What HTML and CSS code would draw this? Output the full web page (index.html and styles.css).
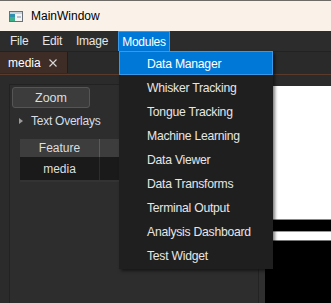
FILE: index.html
```html
<!DOCTYPE html>
<html lang="en">
<head>
    <meta charset="UTF-8">
    <title>MainWindow</title>
    <link rel="stylesheet" href="styles.css">
</head>
<body>
    <div class="window">
        <div class="titlebar">
            <svg class="app-icon" width="14" height="11" viewBox="0 0 14 11">
                <rect x="0.5" y="0.5" width="13" height="10" fill="#f4f4f4" stroke="#6b7078"/>
                <rect x="1" y="1" width="12" height="2" fill="#c9d3dc"/>
                <rect x="1" y="3" width="5" height="7" fill="#2f8fb0"/>
                <rect x="1" y="6" width="5" height="4" fill="#3fae8a"/>
                <rect x="8" y="5" width="4" height="2" fill="#b8c2cc"/>
            </svg>
            <span class="title">MainWindow</span>
        </div>

        <div class="menubar">
            <span class="menu-item">File</span>
            <span class="menu-item">Edit</span>
            <span class="menu-item">Image</span>
            <span class="menu-item active">Modules</span>
        </div>

        <div class="tabbar">
            <div class="tab">
                <span>media</span>
                <svg class="tab-close" width="8" height="8" viewBox="0 0 8 8">
                    <path d="M0.5 0.5 L7.5 7.5 M7.5 0.5 L0.5 7.5" stroke="#d8d8d8" stroke-width="1.1"/>
                </svg>
            </div>
        </div>

        <div class="workspace">
            <div class="side">
                <div class="side-frame">
                    <button class="zoom-btn">Zoom</button>
                    <div class="tree-row"><span class="arrow"></span>Text Overlays</div>
                    <div class="feature-table">
                        <div class="th first">Feature</div>
                        <div class="th"></div>
                        <div class="td first">media</div>
                        <div class="td"></div>
                    </div>
                </div>
            </div>
            <div class="splitter"></div>
            <div class="viewer">
                <div class="view-top"></div>
                <div class="canvas"></div>
                <div class="gap-black"></div>
                <div class="strip-white"></div>
                <div class="rest-black"></div>
            </div>
        </div>

        <!-- Modules menu, open -->
        <div class="dropdown">
            <div class="drop-item active">Data Manager</div>
            <div class="drop-item">Whisker Tracking</div>
            <div class="drop-item">Tongue Tracking</div>
            <div class="drop-item">Machine Learning</div>
            <div class="drop-item">Data Viewer</div>
            <div class="drop-item">Data Transforms</div>
            <div class="drop-item">Terminal Output</div>
            <div class="drop-item">Analysis Dashboard</div>
            <div class="drop-item">Test Widget</div>
        </div>
    </div>
</body>
</html>
```

FILE: styles.css
```css
body {
    margin: 0;
    padding: 0;
    font-family: "Liberation Sans", Arial, sans-serif;
    font-size: 12px;
    background-color: #2b2b2b;
    overflow: hidden;
}
.window {
    position: relative;
    width: 331px;
    height: 303px;
    overflow: hidden;
}

/* title bar */
.titlebar {
    height: 30px;
    border-top: 1px solid #6e6a66;
    background-color: #faf1e8;
    display: flex;
    align-items: center;
    padding-left: 9px;
}
.app-icon {
    display: block;
    margin-top: 1px;
}
.title {
    margin-left: 8px;
    color: #000;
}

/* menu bar */
.menubar {
    height: 20px;
    background-color: #2c2c2c;
    display: flex;
    gap: 6px;
    padding-left: 6px;
}
.menu-item {
    padding: 0 4px;
    line-height: 21px;
    color: #e6e6e6;
    letter-spacing: -0.25px;
}
.menu-item.active {
    background-color: #0078d7;
    border: 1px solid #3a98e8;
    border-bottom: none;
    padding: 0 3px;
    line-height: 20px;
    color: #fff;
}

/* tab bar */
.tabbar {
    height: 22px;
    border-top: 1px solid #222;
    border-bottom: 1px solid #5a3b2b;
    background-color: #2a2a2a;
    display: flex;
}
.tab {
    width: 59px;
    height: 21px;
    padding-left: 8px;
    background-color: #3d2d26;
    border-right: 1px solid #1e1e1e;
    display: flex;
    align-items: center;
    gap: 8px;
    color: #fff;
}
.tab-close {
    display: block;
}

/* workspace */
.workspace {
    display: flex;
    height: 228px;
}
.side {
    width: 249px;
    padding: 9px 0 0 9px;
    background-color: #2b2b2b;
    display: flex;
}
.side-frame {
    flex: 1;
    border-top: 1px solid #222;
    border-left: 1px solid #222;
    background-color: #2d2d2d;
    padding: 2px 0 0 2px;
}
.zoom-btn {
    display: block;
    width: 78px;
    height: 21px;
    padding: 0;
    background-color: #3c3c3c;
    border: 1px solid #555;
    border-radius: 3px;
    color: #dedede;
    font-family: "Liberation Sans", Arial, sans-serif;
    font-size: 12.5px;
}
.tree-row {
    height: 20px;
    margin-top: 3px;
    display: flex;
    align-items: center;
    color: #d6dde6;
    letter-spacing: -0.25px;
}
.arrow {
    width: 0;
    height: 0;
    margin: 0 8px 0 7px;
    border-left: 4px solid #9a9a9a;
    border-top: 3.5px solid transparent;
    border-bottom: 3.5px solid transparent;
}
.feature-table {
    display: grid;
    grid-template-columns: 80px 1fr;
    grid-template-rows: 18px 23px;
    margin: 8px 0 0 8px;
    width: 236px;
    border-bottom: 2px solid #333;
    color: #dedede;
}
.th, .td {
    display: flex;
    align-items: center;
    justify-content: center;
}
.th {
    background-color: #3d3d3d;
}
.td {
    background-color: #1a1a1a;
}
.th.first {
    border-right: 1px solid #5a5a5a;
}
.td.first {
    border-right: 1px solid #2c2c2c;
}

.splitter {
    width: 6px;
    border-left: 1px solid #232323;
    background-color: #2f2f2f;
}

/* image viewer */
.viewer {
    flex: 1;
    display: flex;
    flex-direction: column;
    background-color: #000;
}
.view-top {
    height: 11px;
    background-color: #2b2b2b;
}
.canvas {
    height: 133px;
    background-color: #fff;
    border-bottom: 1px solid #888;
}
.gap-black {
    height: 11px;
}
.strip-white {
    height: 8px;
    background-color: #fff;
    border-top: 1px solid #999;
    border-bottom: 1px solid #777;
}
.rest-black {
    flex: 1;
}

/* dropdown */
.dropdown {
    position: absolute;
    left: 119px;
    top: 51px;
    width: 154px;
    height: 218px;
    box-sizing: border-box;
    padding-bottom: 2px;
    background-color: #1f1f1f;
    box-shadow: 2px 2px 3px rgba(0, 0, 0, 0.5);
}
.drop-item {
    height: 24px;
    line-height: 26px;
    padding-left: 28px;
    color: #e6e6e6;
    letter-spacing: -0.25px;
    font-size: 12.2px;
}
.drop-item.active {
    box-sizing: border-box;
    line-height: 24px;
    padding-left: 27px;
    background-color: #0078d7;
    border: 1px solid #3a98e8;
    color: #fff;
}
```
